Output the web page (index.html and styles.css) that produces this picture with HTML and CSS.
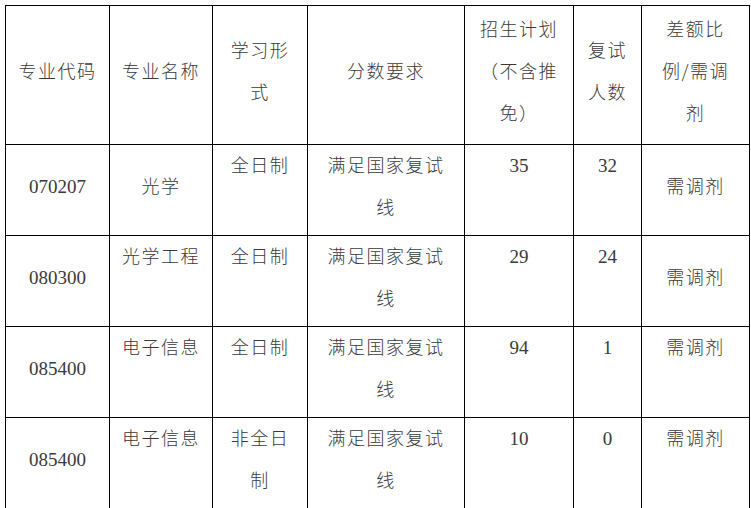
FILE: index.html
```html
<!DOCTYPE html>
<html lang="zh-CN">
<head>
<meta charset="utf-8">
<title>招生计划</title>
<link rel="stylesheet" href="styles.css">
</head>
<body>
<table class="plan">
  <colgroup>
    <col class="c1"><col class="c2"><col class="c3"><col class="c4"><col class="c5"><col class="c6"><col class="c7">
  </colgroup>
  <thead>
    <tr class="head">
      <th class="mid"><div class="t">专业代码</div></th>
      <th class="mid"><div class="t">专业名称</div></th>
      <th class="mid"><div class="t">学习形<br>式</div></th>
      <th class="mid"><div class="t">分数要求</div></th>
      <th class="mid"><div class="t">招生计划<br>（不含推<br>免）</div></th>
      <th class="mid"><div class="t">复试<br>人数</div></th>
      <th class="mid"><div class="t">差额比<br>例/需调<br>剂</div></th>
    </tr>
  </thead>
  <tbody>
    <tr>
      <td class="mid num"><div class="t">070207</div></td>
      <td class="mid"><div class="t">光学</div></td>
      <td><div class="t">全日制</div></td>
      <td><div class="t">满足国家复试<br>线</div></td>
      <td class="num"><div class="t">35</div></td>
      <td class="num"><div class="t">32</div></td>
      <td class="mid"><div class="t">需调剂</div></td>
    </tr>
    <tr>
      <td class="mid num"><div class="t">080300</div></td>
      <td><div class="t">光学工程</div></td>
      <td><div class="t">全日制</div></td>
      <td><div class="t">满足国家复试<br>线</div></td>
      <td class="num"><div class="t">29</div></td>
      <td class="num"><div class="t">24</div></td>
      <td class="mid"><div class="t">需调剂</div></td>
    </tr>
    <tr>
      <td class="mid num"><div class="t">085400</div></td>
      <td><div class="t">电子信息</div></td>
      <td><div class="t">全日制</div></td>
      <td><div class="t">满足国家复试<br>线</div></td>
      <td class="num"><div class="t">94</div></td>
      <td class="num"><div class="t">1</div></td>
      <td><div class="t">需调剂</div></td>
    </tr>
    <tr>
      <td class="mid num"><div class="t">085400</div></td>
      <td><div class="t">电子信息</div></td>
      <td><div class="t">非全日<br>制</div></td>
      <td><div class="t">满足国家复试<br>线</div></td>
      <td class="num"><div class="t">10</div></td>
      <td class="num"><div class="t">0</div></td>
      <td><div class="t">需调剂</div></td>
    </tr>
  </tbody>
</table>
</body>
</html>
```

FILE: styles.css
```css
html, body {
  background: #ffffff;
}
body {
  margin: 5px 0 0 5px;
  font-family: "Liberation Serif", "Noto Sans CJK SC", serif;
  color: #3a3a3a;
}
.plan {
  border-collapse: collapse;
  table-layout: fixed;
  width: 744px;
}
.c1 { width: 104px; }
.c2 { width: 103px; }
.c3 { width: 95px; }
.c4 { width: 157px; }
.c5 { width: 109px; }
.c6 { width: 68px; }
.c7 { width: 108px; }
.plan th,
.plan td {
  border: 1px solid #000000;
  padding: 0;
  text-align: center;
  vertical-align: top;
  font-size: 18px;
  font-weight: 300;
  letter-spacing: 1.5px;
  line-height: 42px;
  font-family: "Noto Sans CJK SC", sans-serif;
}
.plan .mid {
  vertical-align: middle;
  padding-bottom: 6px;
}
.plan .num {
  font-family: "Liberation Serif", serif;
  font-size: 19px;
  font-weight: 400;
  letter-spacing: 0;
}
.t {
  margin-top: -2px;
  margin-bottom: 2px;
}
.plan .num .t {
  margin-top: 0;
  margin-bottom: 0;
}
.head {
  height: 139px;
}
.plan tbody tr {
  height: 91px;
}
```
